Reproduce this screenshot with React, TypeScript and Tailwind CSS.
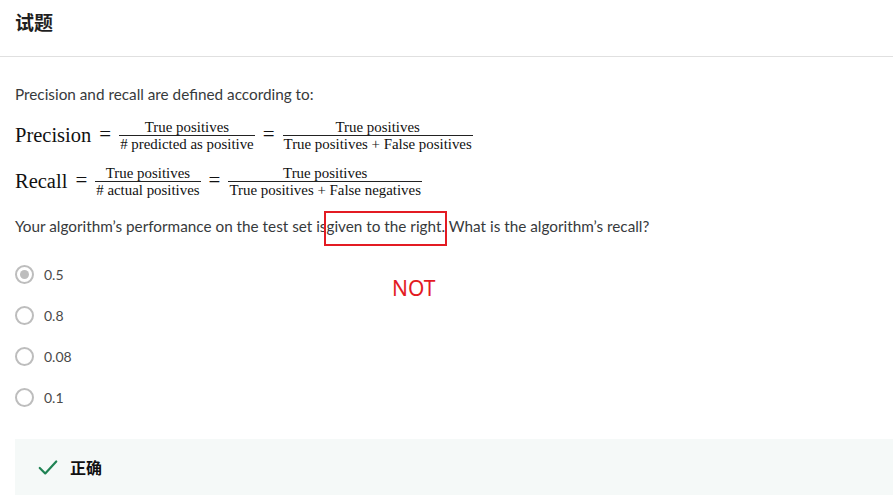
import React from "react";

const body = { fontFamily: "Lato, 'Noto Sans CJK SC', sans-serif" };
const serif = { fontFamily: "'Liberation Serif', 'DejaVu Serif', serif" };

function Frac({ num, den }: { num: string; den: string }) {
  return (
    <span className="inline-flex flex-col items-center align-middle">
      <span className="text-[14.9px] leading-[16px] px-[1px] whitespace-nowrap">{num}</span>
      <span className="text-[14.9px] leading-[16px] px-[1px] whitespace-nowrap border-t-[1.5px] border-[#222]">{den}</span>
    </span>
  );
}

function Eq() {
  return <span className="text-[21px] mx-[8px]">=</span>;
}

function Radio({ label, checked }: { label: string; checked?: boolean }) {
  return (
    <div className="flex items-center h-[41px]">
      <span className="w-[19px] h-[19px] rounded-full border-2 border-[#bdbdbd] flex items-center justify-center bg-white">
        {checked && <span className="w-[9px] h-[9px] rounded-full bg-[#bdbdbd]" />}
      </span>
      <span className="ml-[10px] text-[14px] text-[#4a4a4a]">{label}</span>
    </div>
  );
}

export default function App() {
  return (
    <div className="w-[893px] h-[504px] bg-white overflow-hidden text-[#333]" style={body}>
      <div className="h-[57px] border-b border-[#e0e0e0] px-[15px] pt-[8px]">
        <h1 className="text-[19px] font-bold text-[#1f1f1f] leading-[28px]" style={{ fontFamily: "'Noto Sans CJK SC', sans-serif" }}>试题</h1>
      </div>
      <div className="pl-[15px]">
        <p className="mt-[26px] text-[15.3px] leading-[22px] text-[#373a3c]">Precision and recall are defined according to:</p>
        <div className="mt-[10px] text-[#111]" style={serif}>
          <div className="flex items-center h-[40px]">
            <span className="text-[20.5px]">Precision</span>
            <Eq />
            <Frac num="True positives" den="# predicted as positive" />
            <Eq />
            <Frac num="True positives" den="True positives + False positives" />
          </div>
          <div className="flex items-center h-[40px] mt-[6px]">
            <span className="text-[20.5px]">Recall</span>
            <Eq />
            <Frac num="True positives" den="# actual positives" />
            <Eq />
            <Frac num="True positives" den="True positives + False negatives" />
          </div>
        </div>
        <p className="mt-[14px] text-[15.3px] leading-[22px] text-[#373a3c] whitespace-nowrap">
          Your algorithm’s performance on the test set is
          <span className="outline-2 outline-[#e31b23] pt-[4px] pb-[9px]">given to the right.</span>
          {" "}What is the algorithm’s recall?
        </p>
        <div className="mt-[17px] flex">
          <div className="flex flex-col w-[377px]">
            <Radio label="0.5" checked />
            <Radio label="0.8" />
            <Radio label="0.08" />
            <Radio label="0.1" />
          </div>
          <div className="pt-[19px] text-[21px] text-[#e31b23]" style={{ fontFamily: "'Noto Sans', sans-serif" }}>NOT</div>
        </div>
        <div className="mt-[21px] h-[56px] bg-[#f5f9f8] flex items-center pl-[22px]">
          <svg width="22" height="22" viewBox="0 0 24 24" fill="none" stroke="#1f8354" strokeWidth="2.4" strokeLinecap="round" strokeLinejoin="round">
            <path d="M3 13l6 6L21 6" />
          </svg>
          <span className="ml-[11px] text-[16px] font-bold text-[#111]" style={{ fontFamily: "'Noto Sans CJK SC', sans-serif" }}>正确</span>
        </div>
      </div>
    </div>
  );
}
